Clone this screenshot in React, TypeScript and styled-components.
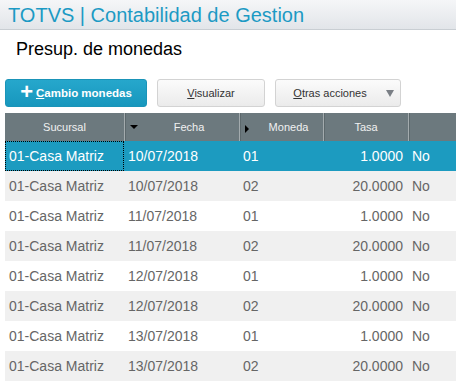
import React from "react";
import styled, { createGlobalStyle } from "styled-components";

const GlobalStyle = createGlobalStyle`
  html, body {
    margin: 0;
    padding: 0;
    background: #ffffff;
    font-family: "Liberation Sans", Arial, sans-serif;
  }
`;

const Page = styled.div`
  width: 456px;
  height: 390px;
  overflow: hidden;
  display: flex;
  flex-direction: column;
`;

const TopBar = styled.header`
  height: 29px;
  border-bottom: 1px solid #c9ced3;
  background: linear-gradient(#f5f6f8, #e2e5e9);
  padding-left: 8px;
  display: flex;
  align-items: center;
`;

const AppTitle = styled.h1`
  margin: 0;
  font-size: 20px;
  font-weight: normal;
  line-height: 29px;
  padding-top: 1px;
  color: #1c9ac4;
`;

const PageTitle = styled.h2`
  margin: 9px 0 0 16px;
  font-size: 18px;
  font-weight: normal;
  line-height: 21px;
  color: #000;
`;

const Toolbar = styled.div`
  display: flex;
  gap: 10px;
  margin: 19px 0 0 5px;
`;

const Button = styled.button<{ $primary?: boolean; $width: number }>`
  position: relative;
  width: ${({ $width }) => $width}px;
  height: 28px;
  box-sizing: border-box;
  border-radius: 3px;
  font-family: "Liberation Sans", Arial, sans-serif;
  display: flex;
  align-items: center;
  justify-content: center;
  padding: 0;
  cursor: pointer;
  ${({ $primary }) =>
    $primary
      ? `
    background: linear-gradient(#26a7cc, #1797bd);
    border: 1px solid #1a94b8;
    color: #ffffff;
    font-size: 11.5px;
    font-weight: bold;
  `
      : `
    background: linear-gradient(#fbfbfb, #ebebeb);
    border: 1px solid #d3d3d3;
    color: #333333;
    font-size: 11px;
  `}
  u {
    text-decoration: underline;
  }
`;

const Plus = styled.span`
  font-size: 22px;
  font-weight: bold;
  line-height: 1;
  margin-right: 3px;
  margin-top: -3px;
`;

const Caret = styled.span`
  position: absolute;
  right: 6px;
  top: 10px;
  width: 0;
  height: 0;
  border-left: 4px solid transparent;
  border-right: 4px solid transparent;
  border-top: 7px solid #7a7f85;
`;

const Table = styled.div`
  margin: 6px 0 0 5px;
  width: 451px;
`;

const COLS = "119px 115px 84px 85px 1fr";

const HeadRow = styled.div`
  display: grid;
  grid-template-columns: ${COLS};
  height: 28px;
  background: #6c797e;
`;

const HeadCell = styled.div<{ $pad?: number }>`
  position: relative;
  display: flex;
  align-items: center;
  justify-content: center;
  padding-left: ${({ $pad }) => $pad ?? 0}px;
  font-size: 11px;
  color: #f0f1f1;
  border-left: 1px solid #a3abae;
  box-shadow: inset 1px 0 0 #5c686c;
  &:first-child {
    border-left: none;
    box-shadow: none;
  }
`;

const SortDown = styled.span`
  position: absolute;
  left: 5px;
  top: 12px;
  border-left: 4px solid transparent;
  border-right: 4px solid transparent;
  border-top: 4px solid #000;
`;

const SortRight = styled.span`
  position: absolute;
  left: 5px;
  top: 12px;
  border-top: 4px solid transparent;
  border-bottom: 4px solid transparent;
  border-left: 4px solid #000;
`;

const Row = styled.div<{ $selected?: boolean; $shade?: boolean }>`
  display: grid;
  grid-template-columns: ${COLS};
  height: 30px;
  background: ${({ $selected, $shade }) =>
    $selected ? "#1c9bc0" : $shade ? "#f0f0f0" : "#ffffff"};
  color: ${({ $selected }) => ($selected ? "#ffffff" : "#666666")};
  font-size: 14px;
`;

const Cell = styled.div<{ $right?: boolean; $focus?: boolean }>`
  display: flex;
  align-items: center;
  box-sizing: border-box;
  justify-content: ${({ $right }) => ($right ? "flex-end" : "flex-start")};
  padding: 0 4px 0 3px;
  white-space: nowrap;
  border: 1px dotted ${({ $focus }) => ($focus ? "#000" : "transparent")};
`;

const rows = [
  ["10/07/2018", "01", "1.0000"],
  ["10/07/2018", "02", "20.0000"],
  ["11/07/2018", "01", "1.0000"],
  ["11/07/2018", "02", "20.0000"],
  ["12/07/2018", "01", "1.0000"],
  ["12/07/2018", "02", "20.0000"],
  ["13/07/2018", "01", "1.0000"],
  ["13/07/2018", "02", "20.0000"],
];

export default function App() {
  return (
    <Page>
      <GlobalStyle />
      <TopBar>
        <AppTitle>TOTVS | Contabilidad de Gestion</AppTitle>
      </TopBar>
      <PageTitle>Presup. de monedas</PageTitle>
      <Toolbar>
        <Button $primary $width={142}>
          <Plus>+</Plus>
          <span>
            <u>C</u>ambio monedas
          </span>
        </Button>
        <Button $width={108}>
          <span>
            <u>V</u>isualizar
          </span>
        </Button>
        <Button $width={126}>
          <span style={{ marginRight: 16 }}>
            <u>O</u>tras acciones
          </span>
          <Caret />
        </Button>
      </Toolbar>
      <Table>
        <HeadRow>
          <HeadCell>Sucursal</HeadCell>
          <HeadCell $pad={14}>
            <SortDown />
            Fecha
          </HeadCell>
          <HeadCell $pad={14}>
            <SortRight />
            Moneda
          </HeadCell>
          <HeadCell>Tasa</HeadCell>
          <HeadCell />
        </HeadRow>
        {rows.map(([date, cur, rate], i) => (
          <Row key={i} $selected={i === 0} $shade={i % 2 === 1}>
            <Cell $focus={i === 0}>01-Casa Matriz</Cell>
            <Cell>{date}</Cell>
            <Cell>{cur}</Cell>
            <Cell $right>{rate}</Cell>
            <Cell>No</Cell>
          </Row>
        ))}
      </Table>
    </Page>
  );
}
